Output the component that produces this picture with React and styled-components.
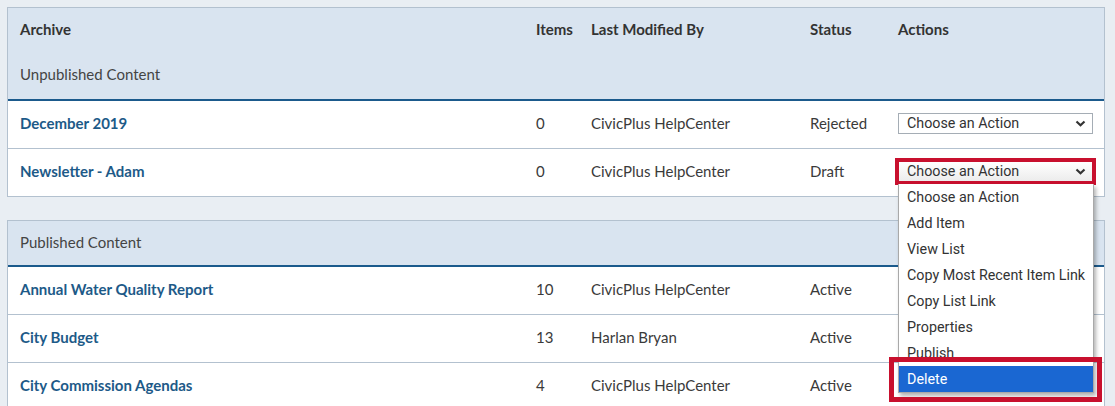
import React from "react";
import styled, { createGlobalStyle } from "styled-components";

const Global = createGlobalStyle`
  html, body { margin: 0; padding: 0; }
  body {
    background: #e9eef3;
    font-family: Lato, "Noto Sans", Arial, sans-serif;
    color: #333;
  }
`;

const Page = styled.div`
  padding: 7px 10px 0 7px;
  width: 1115px;
  height: 406px;
  box-sizing: border-box;
  overflow: hidden;
`;

const Panel = styled.section`
  border: 1px solid #b3c1cf;
  background: #fff;
  margin-bottom: 23px;
`;

const Head = styled.div`
  background: #d9e4f0;
  border-bottom: 2px solid #1b5a8c;
`;

const Grid = styled.div`
  box-sizing: border-box;
  display: grid;
  grid-template-columns: 516px 55px 219px 88px 1fr;
  align-items: center;
  padding: 0 0 3px 12px;
  height: ${(p) => p.$h}px;
  font-size: 15px;
  border-bottom: ${(p) => (p.$last ? "none" : "1px solid #b3c1cf")};
`;

const HeadGrid = styled(Grid)`
  border-bottom: none;
  padding-bottom: 2px;
  font-weight: 700;
  color: #333;
`;

const Caption = styled.div`
  box-sizing: border-box;
  display: flex;
  align-items: center;
  padding: 0 0 2px 12px;
  height: ${(p) => p.$h}px;
  font-size: 15px;
  color: #444;
`;

const LinkCell = styled.a`
  color: #1d5a88;
  font-weight: 700;
  text-decoration: none;
`;

const Cell = styled.div`
  color: #3a3a3a;
`;

const SelectWrap = styled.div`
  position: relative;
  width: 195px;
`;

const Select = styled.div`
  box-sizing: border-box;
  height: 21px;
  width: 195px;
  border: 1px solid #a5adb5;
  background: ${(p) => (p.$open ? "linear-gradient(#ffffff, #ececec)" : "#fff")};
  display: flex;
  align-items: center;
  justify-content: space-between;
  padding: 0 6px 0 8px;
  font-family: Roboto, Arial, sans-serif;
  font-size: 14.3px;
  color: #333;
  outline: ${(p) => (p.$open ? "4px solid #c8102e" : "none")};
  outline-offset: -1px;
`;

const Menu = styled.ul`
  position: absolute;
  top: 23px;
  left: 0;
  width: 194px;
  margin: 0;
  padding: 0;
  list-style: none;
  background: #fff;
  border: 1px solid #a9a9a9;
  border-top: none;
  box-shadow: 2px 3px 4px rgba(0, 0, 0, 0.3);
  z-index: 5;
  font-family: Roboto, Arial, sans-serif;
  font-size: 14.3px;
`;

const Option = styled.li`
  position: relative;
  height: 26px;
  line-height: 26px;
  padding-left: 8px;
  white-space: nowrap;
  color: ${(p) => (p.$active ? "#fff" : "#333")};
  background: ${(p) => (p.$active ? "#1a67d2" : "transparent")};
`;

const Callout = styled.span`
  position: absolute;
  left: -10px;
  right: -9px;
  top: -9px;
  bottom: -10px;
  border: 5px solid #c8102e;
  pointer-events: none;
`;

const Chevron = () => (
  <svg width="11" height="7" viewBox="0 0 11 7">
    <path d="M1.5 1.5 L5.5 5.2 L9.5 1.5" fill="none" stroke="#333" strokeWidth="2.2" />
  </svg>
);

const options = [
  "Choose an Action",
  "Add Item",
  "View List",
  "Copy Most Recent Item Link",
  "Copy List Link",
  "Properties",
  "Publish",
  "Delete",
];

const Action = ({ open }) => (
  <SelectWrap>
    <Select $open={open}>
      <span>Choose an Action</span>
      <Chevron />
    </Select>
    {open && (
      <Menu>
        {options.map((o) => (
          <Option key={o} $active={o === "Delete"}>
            {o}
            {o === "Delete" && <Callout />}
          </Option>
        ))}
      </Menu>
    )}
  </SelectWrap>
);

const unpublished = [
  { name: "December 2019", items: 0, by: "CivicPlus HelpCenter", status: "Rejected", action: true },
  { name: "Newsletter - Adam", items: 0, by: "CivicPlus HelpCenter", status: "Draft", action: true, open: true },
];

const published = [
  { name: "Annual Water Quality Report", items: 10, by: "CivicPlus HelpCenter", status: "Active" },
  { name: "City Budget", items: 13, by: "Harlan Bryan", status: "Active" },
  { name: "City Commission Agendas", items: 4, by: "CivicPlus HelpCenter", status: "Active" },
];

const Row = ({ r, last }) => (
  <Grid $h={r.h || 48} $last={last}>
    <LinkCell href="#">{r.name}</LinkCell>
    <Cell>{r.items}</Cell>
    <Cell>{r.by}</Cell>
    <Cell>{r.status}</Cell>
    <div>{r.action && <Action open={r.open} />}</div>
  </Grid>
);

export default function App() {
  return (
    <>
      <Global />
      <Page>
        <Panel>
          <Head>
            <HeadGrid $h={43}>
              <div>Archive</div>
              <div>Items</div>
              <div>Last Modified By</div>
              <div>Status</div>
              <div>Actions</div>
            </HeadGrid>
            <Caption $h={48}>Unpublished Content</Caption>
          </Head>
          {unpublished.map((r, i) => (
            <Row
              key={r.name}
              r={{ ...r, h: i === unpublished.length - 1 ? 47 : 48 }}
              last={i === unpublished.length - 1}
            />
          ))}
        </Panel>
        <Panel>
          <Head>
            <Caption $h={44}>Published Content</Caption>
          </Head>
          {published.map((r) => (
            <Row key={r.name} r={r} />
          ))}
        </Panel>
      </Page>
    </>
  );
}
